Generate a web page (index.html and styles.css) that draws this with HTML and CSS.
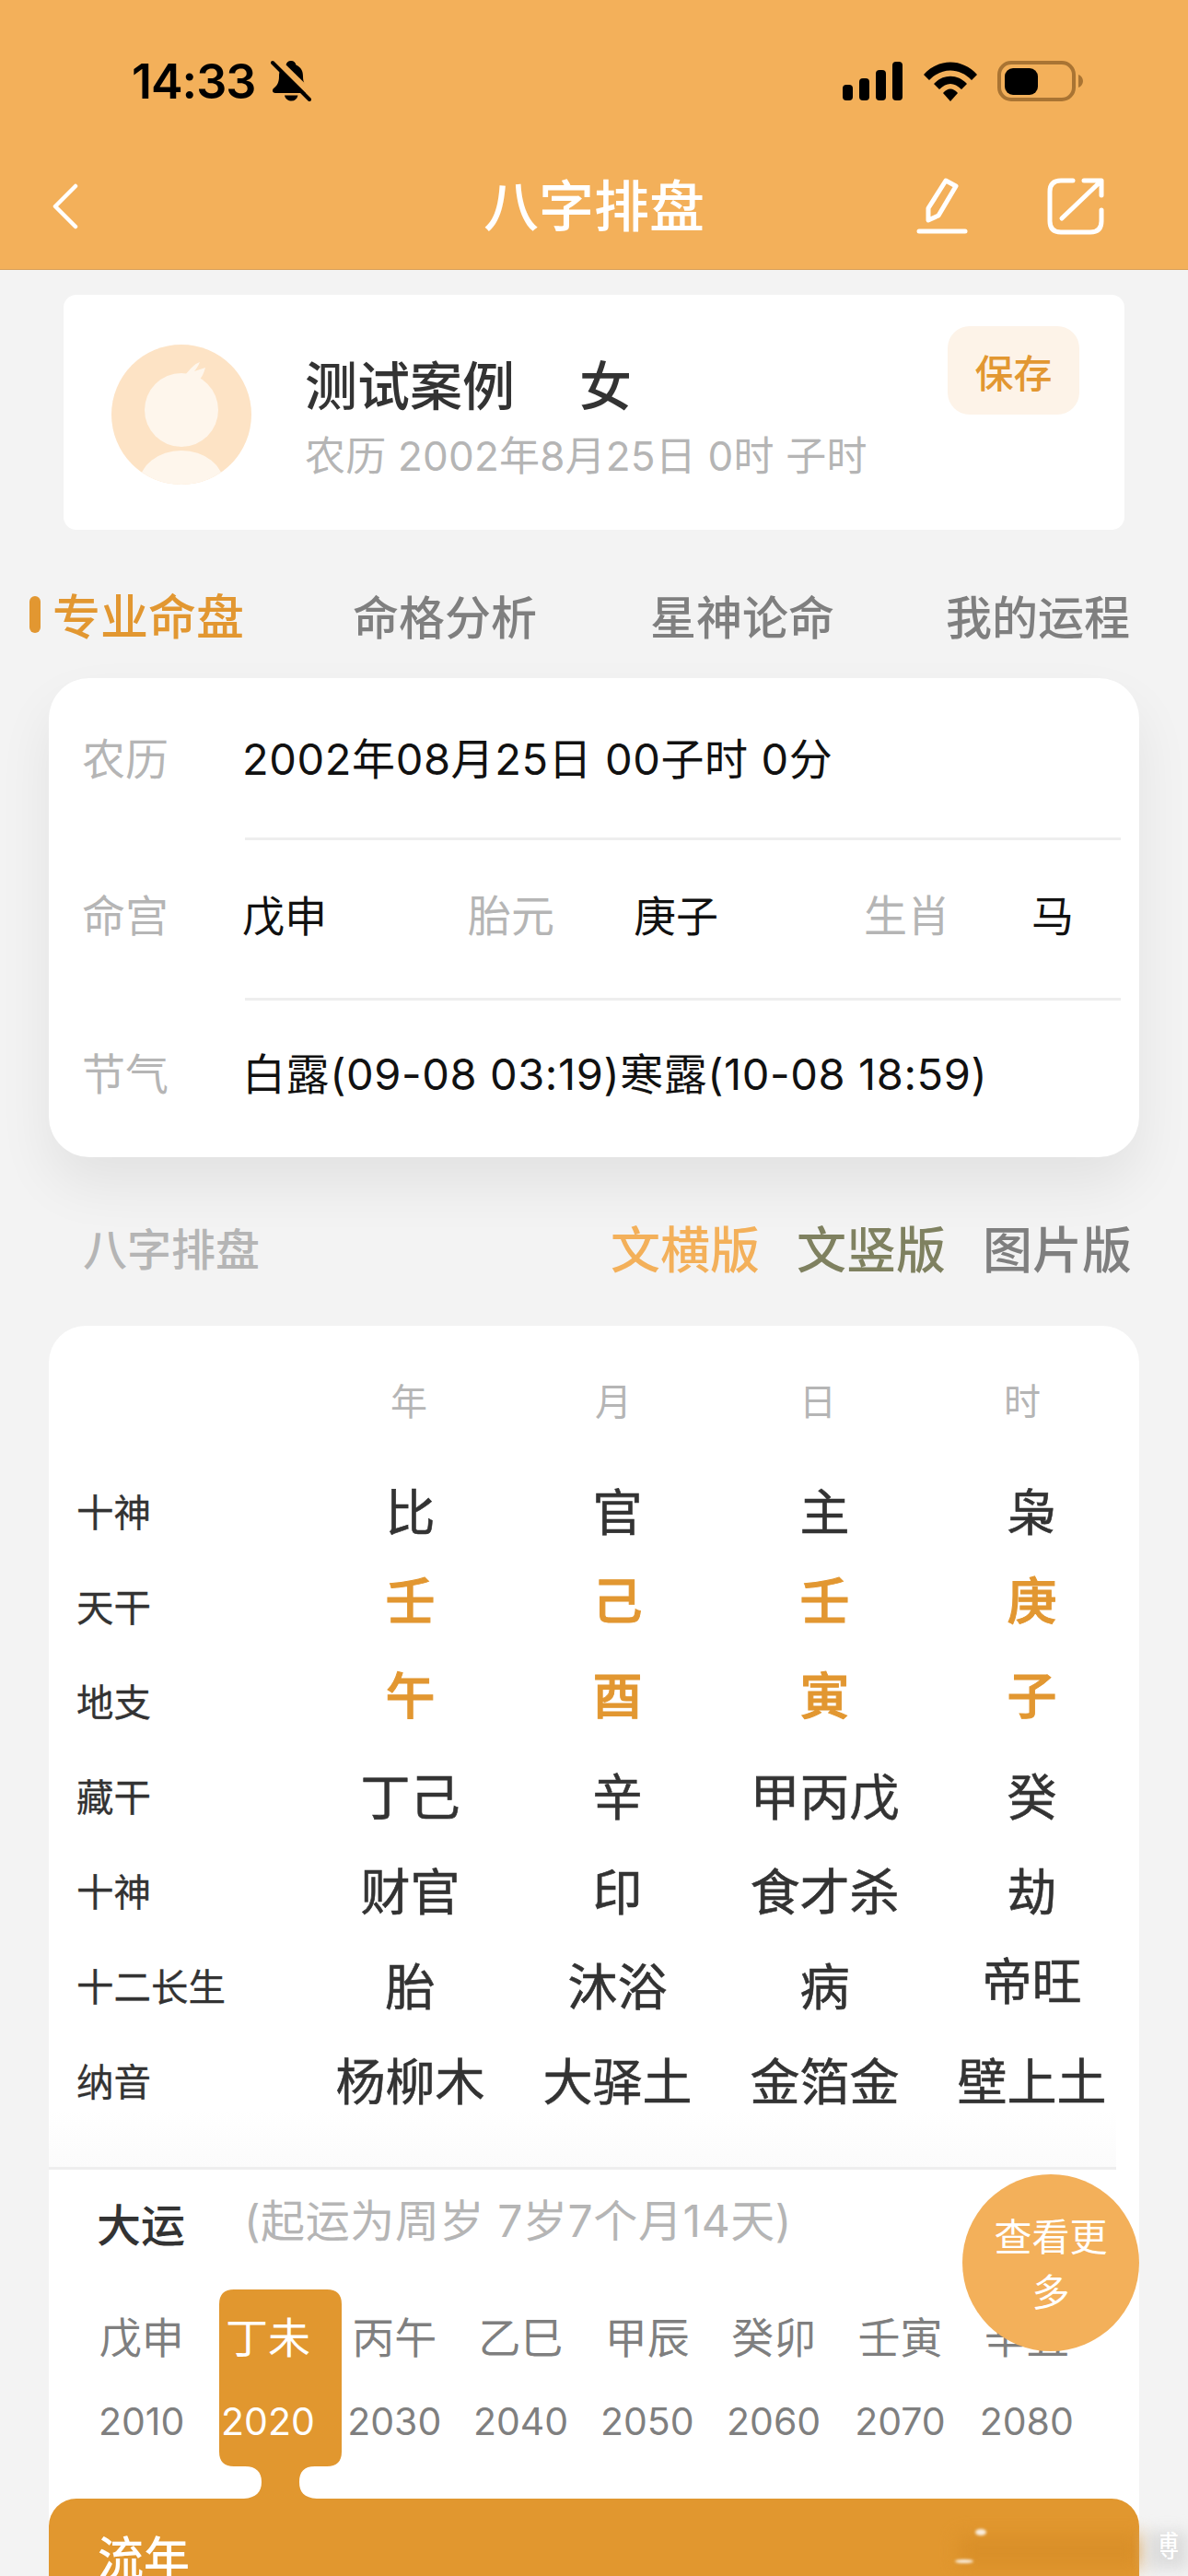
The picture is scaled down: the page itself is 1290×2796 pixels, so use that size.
FILE: index.html
```html
<!DOCTYPE html>
<html lang="zh-CN">
<head>
  <meta charset="UTF-8">
  <meta name="viewport" content="width=device-width, initial-scale=1.0">
  <title>八字排盘</title>
  <link rel="stylesheet" href="styles.css">
</head>
<body>
  <div id="app">
    <header class="top">
      <div class="status">
        <div class="status-left">
          <span class="time">14:33</span>
          <svg class="bell" width="44" height="46" viewBox="0 0 44 46">
            <path d="M22 1c-3 0-5 2-5.500 4.500C11 8 9 12 9 18c0 6-2 10-6 13-2 2-1 5 2 5h34c3 0 4-3 2-5-4-3-6-7-6-13 0-6-2-10-7.500-12.500C27 3 25 1 22 1z" fill="#000"/>
            <path d="M15 38.500c1 4 4 6 7.500 6s6-2 7-6z" fill="#000"/>
            <path d="M5 -1 L46 39" stroke="#f3b05a" stroke-width="7" fill="none"/>
            <path d="M2 3 L42 43" stroke="#000" stroke-width="4" stroke-linecap="round" fill="none"/>
          </svg>
        </div>
        <div class="status-right">
          <svg width="66" height="42" viewBox="0 0 66 42" fill="#000">
            <rect x="0" y="25" width="11" height="17" rx="4"/>
            <rect x="18" y="18" width="11" height="24" rx="4"/>
            <rect x="36" y="9" width="11" height="33" rx="4"/>
            <rect x="54" y="0" width="11" height="42" rx="4"/>
          </svg>
          <svg width="58" height="43" viewBox="0 0 58 43" fill="#000">
            <path d="M0 14 C16 -4 42 -4 58 14 L52 20 C39 6 19 6 6 20 Z"/>
            <path d="M11 24 C21 13 37 13 47 24 L41 30 C33 22 25 22 17 30 Z"/>
            <path d="M21 34 C26 28 32 28 37 34 L29 43 Z"/>
          </svg>
          <svg width="94" height="44" viewBox="0 0 94 44">
            <rect x="2" y="2" width="81" height="40" rx="13" fill="none" stroke="#a97433" stroke-width="4"/>
            <rect x="8" y="8" width="36" height="29" rx="9" fill="#000"/>
            <path d="M88 15c3 1 5 4 5 7s-2 6-5 7z" fill="#a97433"/>
          </svg>
        </div>
      </div>
      <nav class="nav">
        <svg class="back" width="30" height="50" viewBox="0 0 30 50">
          <path d="M26 3 L4 25 L26 47" fill="none" stroke="#fff" stroke-width="4.500" stroke-linecap="round" stroke-linejoin="round"/>
        </svg>
        <h1 class="nav-title">八字排盘</h1>
        <svg class="edit" width="56" height="62" viewBox="0 0 56 62">
          <path d="M13 46 L13 33 L32 3 L43 9 L24 41 Z" fill="none" stroke="#fff" stroke-width="5" stroke-linejoin="round"/>
          <path d="M3 58 H53" stroke="#fff" stroke-width="5" stroke-linecap="round"/>
        </svg>
        <svg class="share" width="62" height="62" viewBox="0 0 62 62">
          <path d="M28 3 H15 C7 3 3 7 3 15 V47 C3 55 7 59 15 59 H47 C55 59 59 55 59 47 V35" fill="none" stroke="#fff" stroke-width="5" stroke-linecap="round"/>
          <path d="M16 44 L58 4 M40 3 H59 V19" fill="none" stroke="#fff" stroke-width="5" stroke-linecap="round" stroke-linejoin="round"/>
        </svg>
      </nav>
    </header>

    <section class="case-card">
      <svg class="avatar" width="152" height="152" viewBox="0 0 152 152">
        <defs><clipPath id="avatar-clip"><circle cx="76" cy="76" r="76"/></clipPath></defs>
        <circle cx="76" cy="76" r="76" fill="#fde3c5"/>
        <g clip-path="url(#avatar-clip)" fill="#fef6ec">
          <circle cx="76" cy="71" r="40"/>
          <path d="M80 33 C86 26 90 21 96 19 C94 24 92 26 90 29 L102 25 C100 32 98 36 94 40 Z"/>
          <ellipse cx="76" cy="152" rx="46" ry="37"/>
        </g>
      </svg>
      <div class="case-text">
        <div class="case-name"><span>测试案例</span><span>女</span></div>
        <div class="case-date">农历 2002年8月25日 0时 子时</div>
      </div>
      <button class="save-btn">保存</button>
    </section>

    <div class="tabs">
      <div class="tab active"><i class="tab-mark"></i>专业命盘</div>
      <div class="tab">命格分析</div>
      <div class="tab">星神论命</div>
      <div class="tab">我的运程</div>
    </div>

    <section class="info-card">
      <div class="info-row row-first">
        <span class="info-label">农历</span>
        <span class="info-text">2002年08月25日 00子时 0分</span>
      </div>
      <div class="info-line"></div>
      <div class="info-row row-mid">
        <span class="info-label">命宫</span>
        <div class="info-cols">
          <span>戊申</span>
          <span class="info-label">胎元</span>
          <span>庚子</span>
          <span class="info-label">生肖</span>
          <span>马</span>
        </div>
      </div>
      <div class="info-line"></div>
      <div class="info-row row-last">
        <span class="info-label">节气</span>
        <span class="info-text">白露(09-08 03:19)寒露(10-08 18:59)</span>
      </div>
    </section>

    <div class="section-head">
      <span class="section-title">八字排盘</span>
      <div class="versions">
        <span class="v-heng">文横版</span>
        <span class="v-shu">文竖版</span>
        <span class="v-pic">图片版</span>
      </div>
    </div>

    <section class="chart-card">
      <div class="chart-head">
        <span>年</span><span>月</span><span>日</span><span>时</span>
      </div>
      <div class="chart">
        <span class="chart-label">十神</span><span>比</span><span>官</span><span>主</span><span>枭</span>
        <span class="chart-label">天干</span><span class="gan">壬</span><span class="gan">己</span><span class="gan">壬</span><span class="gan">庚</span>
        <span class="chart-label">地支</span><span class="gan">午</span><span class="gan">酉</span><span class="gan">寅</span><span class="gan">子</span>
        <span class="chart-label">藏干</span><span>丁己</span><span>辛</span><span>甲丙戊</span><span>癸</span>
        <span class="chart-label">十神</span><span>财官</span><span>印</span><span>食才杀</span><span>劫</span>
        <span class="chart-label">十二长生</span><span>胎</span><span>沐浴</span><span>病</span><span class="lift">帝旺</span>
        <span class="chart-label">纳音</span><span>杨柳木</span><span>大驿土</span><span>金箔金</span><span>壁上土</span>
      </div>
      <div class="chart-fade"></div>

      <div class="dayun">
        <svg class="dayun-pick" width="133" height="232" viewBox="0 0 133 232">
          <path d="M16 0 H117 Q133 0 133 16 V176 Q133 192 117 192 H104 C92 192 87 198 87 209 C87 220 92 226 106 227 V232 H27 V227 C40 226 46 220 46 209 C46 198 40 192 28 192 H16 Q0 192 0 176 V16 Q0 0 16 0 Z" fill="#e1972f"/>
        </svg>
        <div class="dayun-head">
          <span class="dayun-title">大运</span>
          <span class="dayun-note">(起运为周岁 7岁7个月14天)</span>
        </div>
        <div class="dayun-list">
          <div class="dayun-item"><span>戊申</span><span>2010</span></div>
          <div class="dayun-item current"><span>丁未</span><span>2020</span></div>
          <div class="dayun-item"><span>丙午</span><span>2030</span></div>
          <div class="dayun-item"><span>乙巳</span><span>2040</span></div>
          <div class="dayun-item"><span>甲辰</span><span>2050</span></div>
          <div class="dayun-item"><span>癸卯</span><span>2060</span></div>
          <div class="dayun-item"><span>壬寅</span><span>2070</span></div>
          <div class="dayun-item"><span>辛丑</span><span>2080</span></div>
        </div>
        <div class="more-btn">查看更多</div>
      </div>

      <div class="liunian">流年</div>
    </section>

    <div class="mark-blur"></div>
    <div class="mark-side"></div>
    <div class="mark-dot dot-top"></div>
    <div class="mark-dot dot-low"></div>
    <div class="mark-char"><span>博</span></div>
  </div>
</body>
</html>
```

FILE: styles.css
```css
* {
  box-sizing: border-box;
}
html, body {
  margin: 0;
  padding: 0;
}
body {
  font-family: Inter, "Noto Sans CJK SC", sans-serif;
  background-color: #f3f3f3;
}
#app {
  position: relative;
  width: 1290px;
  height: 2796px;
  overflow: hidden;
  background-color: #f3f3f3;
}

/* header */
.top {
  height: 293px;
  background-color: #f3b05a;
  border-bottom: 1px solid #d8a05a;
}
.status {
  height: 176px;
  display: flex;
  justify-content: space-between;
  align-items: center;
  padding: 0 113px 0 143px;
}
.status-left {
  display: flex;
  align-items: center;
  gap: 17px;
}
.time {
  font-size: 52px;
  font-weight: 600;
  letter-spacing: -1px;
  color: #000;
}
.status-right {
  display: flex;
  align-items: center;
  gap: 22px;
}
.nav {
  height: 116px;
  display: flex;
  align-items: center;
  padding: 0 91px 20px 56px;
  color: #fff;
}
.nav-title {
  margin: 0 0 0 439px;
  font-size: 60px;
  font-weight: 500;
  line-height: 80px;
}
.edit {
  margin-left: auto;
}
.share {
  margin-left: 86px;
}

/* case card */
.case-card {
  display: flex;
  align-items: flex-start;
  height: 255px;
  margin: 27px 69px 0;
  padding: 54px 49px 0 52px;
  background: #fff;
  border-radius: 14px;
}
.case-text {
  margin-left: 58px;
  margin-top: 11px;
}
.case-name {
  display: flex;
  gap: 70px;
  font-size: 57px;
  font-weight: 500;
  line-height: 70px;
  color: #333;
}
.case-date {
  margin-top: 10px;
  font-size: 44px;
  letter-spacing: 0.2px;
  line-height: 60px;
  color: #b5b5b5;
}
.save-btn {
  margin: -20px 0 0 auto;
  width: 143px;
  height: 96px;
  border: 0;
  border-radius: 24px;
  background-color: #fdf3e8;
  font-family: inherit;
  font-size: 42px;
  font-weight: 500;
  color: #e29731;
}

/* tabs */
.tabs {
  height: 161px;
  display: flex;
  align-items: center;
  gap: 120px;
  padding: 22px 0 0 32px;
}
.tab {
  display: flex;
  align-items: center;
  font-size: 50px;
  font-weight: 500;
  color: #7f7f7f;
}
.tab.active {
  gap: 13px;
  font-size: 52px;
  color: #e29731;
}
.tab:nth-child(2) {
  margin-left: -2px;
}
.tab:nth-child(3) {
  margin-left: 3px;
}
.tab:nth-child(4) {
  margin-left: 1px;
}
.tab-mark {
  width: 12px;
  height: 40px;
  border-radius: 6px;
  background-color: #e29731;
}

/* info card */
.info-card {
  height: 520px;
  margin: 0 53px;
  background: #fff;
  border-radius: 44px;
  box-shadow: 0 30px 60px rgba(0, 0, 0, 0.07);
  font-size: 46px;
  color: #111;
}
.info-row {
  height: 173px;
  display: flex;
  align-items: center;
  padding-left: 36px;
}
.row-first {
  padding-bottom: 4px;
}
.row-mid {
  height: 171px;
  padding-bottom: 14px;
}
.row-last {
  height: 170px;
  padding-bottom: 18px;
}
.info-label {
  width: 174px;
  flex-shrink: 0;
  font-size: 47px;
  color: #b5b5b5;
}
.info-text {
  font-size: 47px;
  letter-spacing: 0.6px;
}
.info-line {
  height: 3px;
  margin: 0 20px 0 213px;
  background-color: #eeeeee;
}
.info-cols {
  display: grid;
  grid-template-columns: 245px 180px 250px 182px auto;
  align-items: center;
}
.info-cols .info-label {
  width: auto;
}

/* section head */
.section-head {
  height: 183px;
  display: flex;
  justify-content: space-between;
  align-items: center;
  padding: 11px 61px 0 90px;
}
.section-title {
  font-size: 48px;
  font-weight: 500;
  color: #b5b5b5;
}
.versions {
  display: flex;
  gap: 40px;
  font-size: 54px;
  font-weight: 500;
}
.v-heng {
  color: #f3b05a;
}
.v-shu {
  color: #7f8160;
}
.v-pic {
  color: #7f7f7f;
}

/* chart */
.chart-card {
  height: 1356px;
  margin: 0 53px;
  background: #fff;
  border-radius: 40px 40px 0 0;
}
.chart-head {
  height: 174px;
  display: grid;
  grid-template-columns: repeat(4, 222px);
  padding: 57px 0 0 280px;
  font-size: 40px;
  line-height: 52px;
  text-align: center;
  color: #b5b5b5;
}
.chart {
  display: grid;
  grid-template-columns: 280px repeat(4, 225px);
  grid-auto-rows: 60px;
  row-gap: 43px;
  align-items: center;
  justify-items: center;
  font-size: 54px;
  line-height: 60px;
  color: #333;
  -webkit-text-stroke: 0.6px #333;
}
.chart-label {
  justify-self: start;
  padding-left: 30px;
  font-size: 40.500px;
  -webkit-text-stroke: 0.3px #333;
}
.gan {
  margin-bottom: 14px;
  font-weight: 500;
  color: #e29731;
  -webkit-text-stroke: 1px #e29731;
}
.lift {
  margin-bottom: 12px;
}
.chart-fade {
  height: 64px;
  margin-right: 25px;
  background: linear-gradient(#fff, #fbfbfb);
  border-bottom: 3px solid #eeeeee;
}

/* dayun */
.dayun {
  position: relative;
  height: 357px;
}
.dayun-pick {
  position: absolute;
  left: 185px;
  top: 130px;
}
.dayun-head {
  position: relative;
  height: 116px;
  display: flex;
  align-items: center;
  padding: 0 0 3px 52px;
}
.dayun-title {
  width: 160px;
  font-size: 48px;
  font-weight: 500;
  color: #333;
}
.dayun-note {
  margin-bottom: 10px;
  font-size: 48px;
  letter-spacing: 0.6px;
  color: #b5b5b5;
}
.dayun-list {
  position: relative;
  display: grid;
  grid-template-columns: repeat(8, 137.3px);
  padding: 36px 0 0 32px;
}
.dayun-item {
  display: flex;
  flex-direction: column;
  align-items: center;
  gap: 31px;
  font-size: 46px;
  line-height: 60px;
  color: #7f7f7f;
}
.dayun-item span:last-child {
  font-size: 41px;
}
.dayun-item.current {
  color: #fff;
}
.more-btn {
  position: absolute;
  right: 0;
  top: 5px;
  width: 192px;
  height: 192px;
  display: flex;
  align-items: center;
  justify-content: center;
  padding: 4px 30px 0;
  border-radius: 50%;
  background-color: #f3b05a;
  font-size: 41px;
  line-height: 60px;
  text-align: center;
  color: #fff;
}
.liunian {
  position: relative;
  height: 84px;
  overflow: hidden;
  padding: 35px 0 0 53px;
  background-color: #e1972f;
  border-radius: 30px 30px 0 0;
  font-size: 50px;
  font-weight: 500;
  line-height: 60px;
  color: #fff;
}

/* watermark */
.mark-blur {
  position: absolute;
  left: 1040px;
  top: 2752px;
  width: 200px;
  height: 34px;
  background-color: #d68c26;
  opacity: 0.7;
  filter: blur(10px);
}
.mark-side {
  position: absolute;
  left: 1246px;
  top: 2748px;
  width: 44px;
  height: 40px;
  background-color: #dcdcdc;
  filter: blur(8px);
}
.mark-dot {
  position: absolute;
  background-color: #fff;
  border-radius: 50%;
  opacity: 0.85;
  filter: blur(1.500px);
}
.dot-top {
  left: 1059px;
  top: 2745px;
  width: 12px;
  height: 7px;
}
.dot-low {
  left: 1037px;
  top: 2778px;
  width: 20px;
  height: 4px;
}
.mark-char {
  position: absolute;
  left: 1260px;
  top: 2744px;
  width: 20px;
  height: 40px;
  overflow: hidden;
  font-size: 32px;
  line-height: 40px;
  color: #fff;
}
.mark-char span {
  display: block;
  margin-left: -12px;
}
```
